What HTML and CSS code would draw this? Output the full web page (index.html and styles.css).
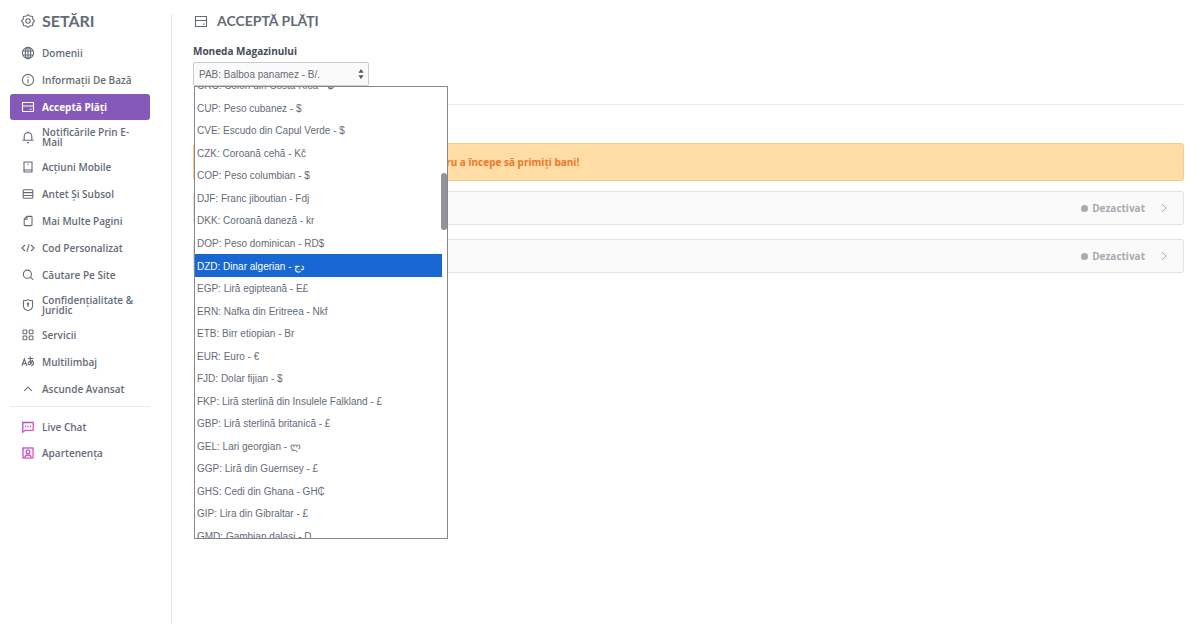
FILE: index.html
```html
<!DOCTYPE html>
<html lang="ro">
<head>
<meta charset="utf-8">
<meta name="viewport" content="width=device-width, initial-scale=1">
<title>Acceptă Plăți</title>
<link rel="stylesheet" href="styles.css">
</head>
<body>
<div class="layout">
  <aside class="sidebar">
    <h2 class="sidebar-title">
      <svg class="icon" viewBox="0 0 14 14"><path d="M7 .6 8.700 2.100 11.500 2.500 11.900 5.200 13.400 7 11.900 8.800 11.500 11.500 8.700 11.900 7 13.400 5.300 11.900 2.500 11.500 2.100 8.800.6 7 2.100 5.200 2.500 2.500 5.300 2.100Z"/><circle cx="7" cy="7" r="2.200"/></svg>
      Setări
    </h2>
    <nav class="nav">
      <a class="nav-item" href="#"><svg class="icon" viewBox="0 0 14 14"><circle cx="7" cy="7" r="5.6"/><ellipse cx="7" cy="7" rx="2.7" ry="5.6"/><path d="M7 1.4v11.2M1.8 5h10.4M1.8 9h10.4"/></svg><span>Domenii</span></a>
      <a class="nav-item" href="#"><svg class="icon" viewBox="0 0 14 14"><circle cx="7" cy="7" r="5.6"/><path d="M7 6.3v3.9M7 3.8v1.2"/></svg><span>Informații De Bază</span></a>
      <a class="nav-item active" href="#" aria-current="page"><svg class="icon" viewBox="0 0 14 14"><path d="M1.500 2.500h11v9h-11zM1.500 6h11M8.700 9.200h1.800"/></svg><span>Acceptă Plăți</span></a>
      <a class="nav-item tall" href="#"><svg class="icon" viewBox="0 0 14 14"><path d="M1.5 10.3h11M3.2 10.2V6.4a3.8 3.8 0 0 1 7.6 0v3.8M7 1.4v1.2M6 12.6h2"/></svg><span>Notificările Prin E-Mail</span></a>
      <a class="nav-item" href="#"><svg class="icon" viewBox="0 0 14 14"><path d="M3 2h8v10H3zM3 10h8M7 3.5v1.2"/></svg><span>Acțiuni Mobile</span></a>
      <a class="nav-item" href="#"><svg class="icon" viewBox="0 0 14 14"><rect x="2.2" y="2.7" width="9.6" height="8.6" rx="1"/><path d="M2.2 5.6h9.6M2.2 8.5h9.6"/></svg><span>Antet Și Subsol</span></a>
      <a class="nav-item" href="#"><svg class="icon" viewBox="0 0 14 14"><path d="M6 2.4h4.2a.8.8 0 0 1 .8.8v7.6a.8.8 0 0 1-.8.8H4a.8.8 0 0 1-.8-.8V5.2ZM6 2.4v2.8H3.2"/></svg><span>Mai Multe Pagini</span></a>
      <a class="nav-item" href="#"><svg class="icon" viewBox="0 0 14 14"><path d="M4 4 .9 7 4 10M10 4l3.1 3L10 10M8.2 3.2 5.8 10.8"/></svg><span>Cod Personalizat</span></a>
      <a class="nav-item" href="#"><svg class="icon" viewBox="0 0 14 14"><circle cx="6.4" cy="6.2" r="4.1"/><path d="m9.4 9.2 2.8 2.6"/></svg><span>Căutare Pe Site</span></a>
      <a class="nav-item tall" href="#"><svg class="icon" viewBox="0 0 14 14"><path d="M7 1.6C5.500 2.500 4 2.700 2.500 2.700v5.500C2.500 10.500 4.500 11.800 7 12.600c2.500-.8 4.500-2.100 4.500-4.400V2.700C10 2.700 8.500 2.500 7 1.600Z"/><circle cx="7" cy="5.800" r=".7"/><path d="M7 6.500v2.500"/></svg><span>Confidențialitate &amp; Juridic</span></a>
      <a class="nav-item" href="#"><svg class="icon" viewBox="0 0 14 14"><rect x="2" y="2" width="3.800" height="3.800" rx=".8"/><rect x="8.200" y="2" width="3.800" height="3.800" rx=".8"/><rect x="2" y="8" width="3.800" height="3.800" rx=".8"/><rect x="8.200" y="8" width="3.800" height="3.800" rx=".8"/></svg><span>Servicii</span></a>
      <a class="nav-item" href="#"><svg class="icon" viewBox="0 0 14 14"><path d="M.9 10.800 3.300 4l2.400 6.800M1.700 8.600h3.200M6.800 3.500h5.700M9.300 1.500c-.2 2.700-.1 5.300.5 7.600M11.700 5c-.8 2.900-2.500 4.800-3.900 4.700-1.300-.2-.8-3.200 2-3.600 3-.4 4.100 3.300.5 4.600"/></svg><span>Multilimbaj</span></a>
      <a class="nav-item" href="#"><svg class="icon" viewBox="0 0 14 14"><path d="m3.200 8.800 3.800-3.600 3.800 3.600"/></svg><span>Ascunde Avansat</span></a>
    </nav>
    <nav class="nav nav-extra">
      <a class="nav-item" href="#"><svg class="icon pink" viewBox="0 0 14 14"><defs><linearGradient id="pink" gradientUnits="userSpaceOnUse" x1="2" y1="2" x2="12" y2="12"><stop stop-color="#a848dc"/><stop offset="1" stop-color="#f458a8"/></linearGradient></defs><path d="M1.800 2.500h10.400v7.800H4.400l-2.600 2Z"/><path d="M4 6.500h1.200M6.400 6.500h1.200M8.800 6.500H10"/></svg><span>Live Chat</span></a>
      <a class="nav-item" href="#"><svg class="icon pink" viewBox="0 0 14 14"><rect x="2" y="2" width="10" height="10"/><circle cx="7" cy="5.800" r="1.900"/><path d="M3.800 11.500c.3-1.800 1.600-2.500 3.200-2.500s2.900.7 3.200 2.500"/></svg><span>Apartenența</span></a>
    </nav>
  </aside>

  <main class="main">
    <h1 class="page-title">
      <svg class="icon" viewBox="0 0 14 14"><path d="M1.500 2.500h11v10h-11zM1.500 6.500h11M8.800 10h1.800"/></svg>
      Acceptă Plăți
    </h1>
    <section class="currency">
      <label class="label" for="currency">Moneda Magazinului</label>
      <div class="select-wrap">
        <select class="select" id="currency"><option>PAB: Balboa panamez - B/.</option></select>
        <svg class="arrows" viewBox="0 0 6 12"><path d="M3 1 5.600 4.800H.4ZM3 11 .4 7.200h5.200Z"/></svg>
        <div class="menu">
          <ul class="options" role="listbox" aria-label="Moneda Magazinului">
            <li class="option" role="option">CRC: Colon din Costa Rica - ₡</li>
            <li class="option" role="option">CUP: Peso cubanez - $</li>
            <li class="option" role="option">CVE: Escudo din Capul Verde - $</li>
            <li class="option" role="option">CZK: Coroană cehă - Kč</li>
            <li class="option" role="option">COP: Peso columbian - $</li>
            <li class="option" role="option">DJF: Franc jiboutian - Fdj</li>
            <li class="option" role="option">DKK: Coroană daneză - kr</li>
            <li class="option" role="option">DOP: Peso dominican - RD$</li>
            <li class="option highlighted" role="option" aria-selected="true">DZD: Dinar algerian - دج</li>
            <li class="option" role="option">EGP: Liră egipteană - E£</li>
            <li class="option" role="option">ERN: Nafka din Eritreea - Nkf</li>
            <li class="option" role="option">ETB: Birr etiopian - Br</li>
            <li class="option" role="option">EUR: Euro - €</li>
            <li class="option" role="option">FJD: Dolar fijian - $</li>
            <li class="option" role="option">FKP: Liră sterlină din Insulele Falkland - £</li>
            <li class="option" role="option">GBP: Liră sterlină britanică - £</li>
            <li class="option" role="option">GEL: Lari georgian - ლ</li>
            <li class="option" role="option">GGP: Liră din Guernsey - £</li>
            <li class="option" role="option">GHS: Cedi din Ghana - GH₵</li>
            <li class="option" role="option">GIP: Lira din Gibraltar - £</li>
            <li class="option" role="option">GMD: Gambian dalasi - D</li>
          </ul>
          <div class="thumb"></div>
        </div>
      </div>
    </section>
    <hr class="divider">
    <p class="alert">pentru a începe să primiți bani!</p>
    <button class="method" type="button"><span class="dot"></span>Dezactivat<svg class="chevron" viewBox="0 0 8 10"><path d="m2 1 4 4-4 4"/></svg></button>
    <button class="method" type="button"><span class="dot"></span>Dezactivat<svg class="chevron" viewBox="0 0 8 10"><path d="m2 1 4 4-4 4"/></svg></button>
  </main>
</div>
</body>
</html>
```
FILE: styles.css
```css
* {
  box-sizing: border-box;
}

body {
  margin: 0;
  background: #fff;
  color: #646b77;
  font-family: "Open Sans", "Noto Sans", sans-serif;
  font-size: 10px;
}

.layout {
  display: flex;
  min-height: 100vh;
  padding-top: 14px;
}

.sidebar {
  flex: none;
  width: 172px;
  padding: 0 21px 0 10px;
  border-right: 1px solid #e5e5e7;
}

.icon {
  flex: none;
  width: 14px;
  height: 14px;
  fill: none;
  stroke: currentColor;
  stroke-width: 1.1;
}

.pink {
  stroke: url(#pink);
  stroke-width: 1.3;
}

.sidebar-title,
.page-title {
  display: flex;
  align-items: center;
  margin: 0;
  font-family: Lato, sans-serif;
  font-size: 16px;
  font-weight: 700;
  line-height: 14px;
  text-transform: uppercase;
}

.sidebar-title {
  gap: 7px;
  padding-left: 11px;
}

.nav {
  display: flex;
  flex-direction: column;
  gap: 1px;
  padding-top: 12px;
}

.nav-item {
  display: flex;
  align-items: center;
  gap: 7px;
  height: 26px;
  padding: 0 11px;
  border-radius: 3px;
  color: inherit;
  font-weight: 600;
  line-height: 10px;
  text-decoration: none;
}

.tall {
  height: 32px;
}

.active {
  background: #8459ba;
  color: #fff;
  font-weight: 700;
}

.nav-extra {
  gap: 0;
  margin-top: 4px;
  padding-top: 7px;
  border-top: 1px solid #e8e8ea;
}

.main {
  flex: 1;
  min-width: 0;
  padding: 0 16px 0 21px;
}

.page-title {
  gap: 9px;
  padding-left: 1px;
  font-size: 14px;
}

.label {
  display: block;
  margin-top: 16px;
  color: #464c58;
  font-weight: 700;
  line-height: 14px;
}

.select-wrap {
  position: relative;
  width: 176px;
  margin-top: 4px;
}

.select {
  display: block;
  width: 100%;
  height: 24px;
  padding: 0 5px;
  border: 1px solid #ccc;
  border-radius: 2px;
  appearance: none;
  background: #fafafa;
  color: #666c77;
  font-family: "Liberation Sans", sans-serif;
  font-size: 10px;
}

.arrows {
  position: absolute;
  top: 6px;
  right: 5px;
  width: 6px;
  height: 12px;
  fill: #555;
  pointer-events: none;
}

.menu {
  position: absolute;
  z-index: 1;
  top: 24px;
  left: 1px;
  width: 254px;
  height: 453px;
  overflow: hidden;
  border: 1px solid #85878b;
  background: #fff;
}

.options {
  display: flex;
  flex-direction: column;
  height: 473px;
  margin: -13px 5px 0 0;
  padding: 0;
  list-style: none;
}

.option {
  display: flex;
  flex: 1;
  align-items: center;
  padding: 1px 0 0 2px;
  font-family: "Liberation Sans", sans-serif;
  white-space: pre;
}

.highlighted {
  background: #1967d2;
  color: #fff;
}

.thumb {
  position: absolute;
  top: 86px;
  right: 0;
  width: 6px;
  height: 57px;
  border-radius: 3px;
  background: #929396;
}

.divider {
  height: 1px;
  margin: 18px 0 38px;
  border: 0;
  background: #ebebed;
}

.alert {
  margin: 0 0 10px;
  padding: 11px 0 11px 229px;
  border: 1px solid #fcca87;
  border-radius: 3px;
  background: #ffdda4;
  color: #f0762b;
  font-weight: 700;
  line-height: 14px;
}

.method {
  display: flex;
  align-items: center;
  justify-content: flex-end;
  width: 100%;
  height: 34px;
  margin-bottom: 14px;
  padding: 0 15px;
  border: 1px solid #e2e2e4;
  border-radius: 3px;
  background: #fafafa;
  color: #a8aab2;
  font-family: inherit;
  font-size: 10px;
  font-weight: 700;
}

.dot {
  width: 7px;
  height: 7px;
  margin-right: 4px;
  border-radius: 50%;
  background: currentColor;
}

.chevron {
  width: 8px;
  height: 10px;
  margin-left: 15px;
  fill: none;
  stroke: currentColor;
}
```
